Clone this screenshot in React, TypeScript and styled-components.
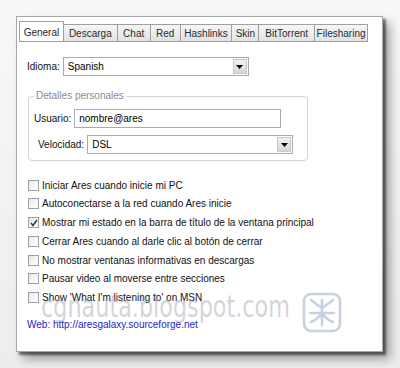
import React from 'react'
import styled, { createGlobalStyle } from 'styled-components'

const GlobalStyle = createGlobalStyle`
	html, body {
		margin: 0;
		padding: 0;
		background: #f3f3f3;
	}
	body {
		font-family: "Liberation Sans", Arial, sans-serif;
		font-size: 10px;
		color: #000;
	}
`

const tabs = [
	{ label: 'General', width: 45 },
	{ label: 'Descarga', width: 55 },
	{ label: 'Chat', width: 34 },
	{ label: 'Red', width: 31 },
	{ label: 'Hashlinks', width: 53 },
	{ label: 'Skin', width: 28 },
	{ label: 'BitTorrent', width: 57 },
	{ label: 'Filesharing', width: 54 },
]

const options = [
	{ label: 'Iniciar Ares cuando inicie mi PC', checked: false },
	{ label: 'Autoconectarse a la red cuando Ares inicie', checked: false },
	{ label: 'Mostrar mi estado en la barra de título de la ventana principal', checked: true },
	{ label: 'Cerrar Ares cuando al darle clic al botón de cerrar', checked: false },
	{ label: 'No mostrar ventanas informativas en descargas', checked: false },
	{ label: 'Pausar video al moverse entre secciones', checked: false },
	{ label: "Show 'What I'm listening to' on MSN", checked: false },
]

export default function App() {
	return (
		<>
			<GlobalStyle />
			<StyledStage>
				<StyledWindow>
					<StyledTabBar>
						{tabs.map((t, i) => (
							<StyledTab key={t.label} active={i === 0} width={t.width}>{t.label}</StyledTab>
						))}
						<StyledTabFill />
					</StyledTabBar>
					<StyledBody>
						<StyledFieldRow>
							<StyledLabel>Idioma:</StyledLabel>
							<StyledSelect width={186}>
								<span>Spanish</span>
								<StyledArrowButton><ArrowIcon /></StyledArrowButton>
							</StyledSelect>
						</StyledFieldRow>

						<StyledGroup>
							<StyledLegend>Detalles personales</StyledLegend>
							<StyledFieldRow>
								<StyledLabel>Usuario:</StyledLabel>
								<StyledInput width={207}>nombre@ares</StyledInput>
							</StyledFieldRow>
							<StyledFieldRow indent={4}>
								<StyledLabel>Velocidad:</StyledLabel>
								<StyledSelect width={206}>
									<span>DSL</span>
									<StyledArrowButton><ArrowIcon /></StyledArrowButton>
								</StyledSelect>
							</StyledFieldRow>
						</StyledGroup>

						<StyledOptionList>
							{options.map(o => (
								<StyledOption key={o.label}>
									<StyledCheck>{o.checked && <CheckIcon />}</StyledCheck>
									<span>{o.label}</span>
								</StyledOption>
							))}
						</StyledOptionList>

						<StyledLink>Web: http://aresgalaxy.sourceforge.net</StyledLink>
					</StyledBody>

					<StyledWatermarkText>cgnauta.blogspot.com</StyledWatermarkText>
					<StyledStamp>
						<svg width="40" height="41" viewBox="0 0 40 41" fill="none" stroke="#bcc6d6" strokeWidth="2.6" strokeLinecap="round" strokeLinejoin="round">
							<rect x="2" y="2" width="36" height="37" rx="7" />
							<path d="M9 8 Q14 12 20 16 Q26 12 31 8" />
							<path d="M20 8 V33" />
							<path d="M8 21 H32" />
							<path d="M20 21 Q15 28 9 30 M20 21 Q25 28 31 30" />
						</svg>
					</StyledStamp>
				</StyledWindow>
			</StyledStage>
		</>
	)
}

const ArrowIcon = () => (
	<svg width="7" height="4" viewBox="0 0 7 4">
		<path d="M0 0 H7 L3.5 4 Z" fill="#000" />
	</svg>
)

const CheckIcon = () => (
	<svg width="8" height="8" viewBox="0 0 8 8">
		<path d="M1 4 L3 6.5 L7 1" fill="none" stroke="#2b3a4a" strokeWidth="1.5" />
	</svg>
)

const StyledStage = styled.div`
	width: 400px;
	height: 368px;
	padding: 16px 0 0 16px;
	box-sizing: border-box;
	background: linear-gradient(#f8f8f8, #ededed);
`

const StyledWindow = styled.div`
	position: relative;
	width: 367px;
	height: 336px;
	box-sizing: border-box;
	background: #fff;
	border: 1px solid #a8a8a8;
	box-shadow: 3px 3px 2px rgba(0, 0, 0, 0.5), 7px 7px 10px rgba(0, 0, 0, 0.35);
	padding: 3px 14px 0 2px;
`

const StyledTabBar = styled.div`
	display: flex;
	align-items: flex-end;
	height: 22px;
`

interface IStyledTabProps {
	active: boolean
	width: number
}
const StyledTab = styled.div<IStyledTabProps>`
	width: ${p => p.width}px;
	height: ${p => (p.active ? 21 : 18)}px;
	line-height: ${p => (p.active ? 21 : 17)}px;
	text-align: center;
	box-sizing: border-box;
	border: 1px solid #a0a0a0;
	border-bottom: ${p => (p.active ? 'none' : '1px solid #a0a0a0')};
	margin-left: -1px;
	background: ${p => (p.active ? '#fff' : 'linear-gradient(#f6f6f6, #e2e2e2)')};
	color: #2a2a2a;
	font-size: 10px;
	white-space: nowrap;
	overflow: hidden;
	&:first-child {
		margin-left: 0;
	}
`

const StyledTabFill = styled.div`
	flex: 1;
`

const StyledBody = styled.div`
	border-top: 1px solid #a0a0a0;
	margin-top: -1px;
	padding: 15px 0 0 8px;
	position: relative;
`

interface IStyledFieldRowProps {
	indent?: number
}
const StyledFieldRow = styled.div<IStyledFieldRowProps>`
	display: flex;
	align-items: center;
	gap: 3px;
	padding-left: ${p => p.indent || 0}px;
	& + & {
		margin-top: 7px;
	}
`

const StyledLabel = styled.span`
	color: #111;
`

interface IStyledBoxProps {
	width: number
}
const StyledSelect = styled.div<IStyledBoxProps>`
	display: flex;
	align-items: center;
	justify-content: space-between;
	width: ${p => p.width}px;
	height: 19px;
	box-sizing: border-box;
	border: 1px solid #a5acb5;
	padding: 0 1px 0 4px;
	background: #fff;
`

const StyledInput = styled.div<IStyledBoxProps>`
	display: flex;
	align-items: center;
	width: ${p => p.width}px;
	height: 19px;
	box-sizing: border-box;
	border: 1px solid #a5acb5;
	padding: 0 4px;
	background: #fff;
`

const StyledArrowButton = styled.div`
	display: flex;
	align-items: center;
	justify-content: center;
	width: 14px;
	height: 15px;
	border: 1px solid #c8c8c8;
	box-sizing: border-box;
	background: linear-gradient(#f2f2f2, #d6d6d6);
`

const StyledGroup = styled.div`
	position: relative;
	margin: 20px 0 0 1px;
	width: 280px;
	height: 65px;
	box-sizing: border-box;
	border: 1px solid #d4d4d4;
	border-radius: 4px;
	padding: 12px 0 0 5px;
`

const StyledLegend = styled.span`
	position: absolute;
	top: -7px;
	left: 5px;
	padding: 0 2px;
	background: #fff;
	color: #8a8a8a;
`

const StyledOptionList = styled.div`
	display: flex;
	flex-direction: column;
	gap: 6.8px;
	margin-top: 18px;
	margin-left: 1px;
`

const StyledOption = styled.div`
	display: flex;
	align-items: center;
	gap: 3px;
	height: 12px;
	color: #111;
`

const StyledCheck = styled.div`
	display: flex;
	align-items: center;
	justify-content: center;
	width: 11px;
	height: 11px;
	box-sizing: border-box;
	border: 1px solid #9aa0a8;
	background: linear-gradient(135deg, #e8e8e8, #ffffff);
`

const StyledLink = styled.div`
	margin-top: 15px;
	color: #2323c8;
`

const StyledWatermarkText = styled.div`
	position: absolute;
	left: 24px;
	top: 274px;
	font-family: "DejaVu Sans Condensed", "DejaVu Sans", sans-serif;
	font-size: 31px;
	line-height: 31px;
	white-space: nowrap;
	transform: scaleX(0.8);
	transform-origin: left top;
	color: rgba(140, 145, 160, 0.4);
	pointer-events: none;
`

const StyledStamp = styled.div`
	position: absolute;
	left: 285px;
	top: 275px;
	display: flex;
	opacity: 0.8;
	pointer-events: none;
`
